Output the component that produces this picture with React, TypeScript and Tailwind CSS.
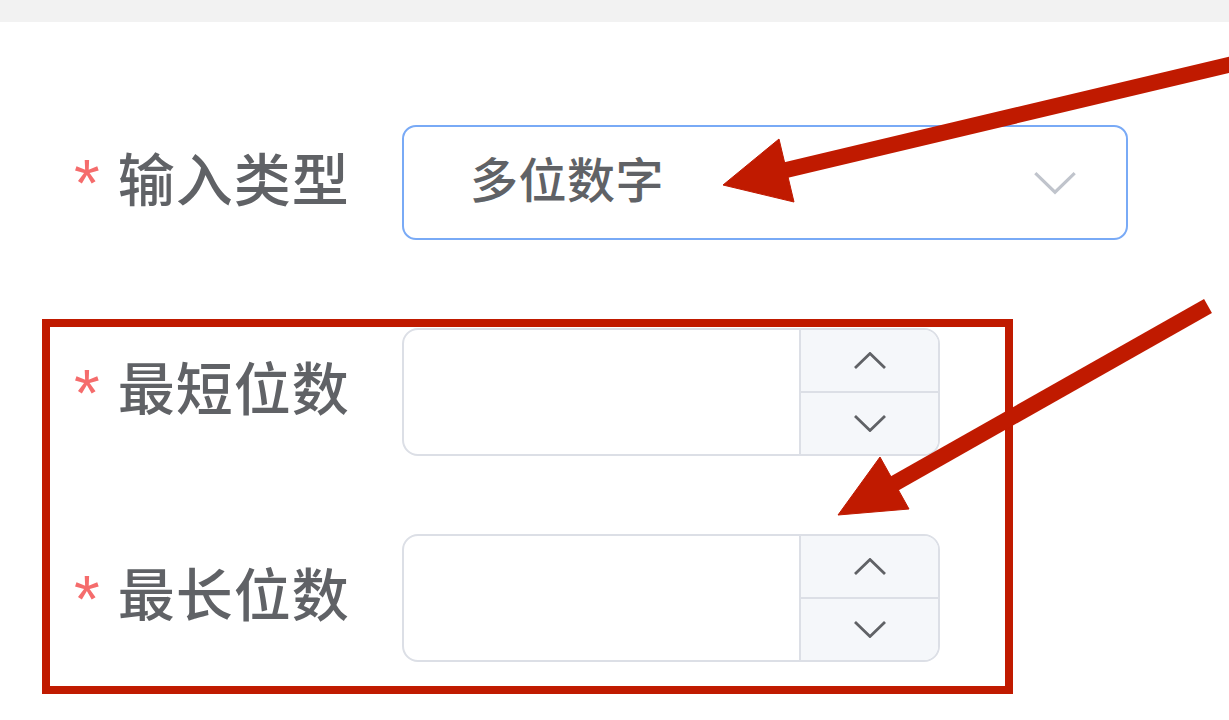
import React from 'react'

const font = { fontFamily: '"Noto Sans CJK SC", "Noto Sans", sans-serif' }

function Label({ text }: { text: string }) {
  return (
    <div className='w-[329px] flex items-center text-[57px] leading-none text-[#606266] font-medium -mt-[13px]'>
      <span className='text-[#f56c6c] text-[66px] font-normal font-["Liberation_Sans",sans-serif] ml-[1px] mr-[18px] mt-[14px]'>*</span>
      <span className='tracking-[1px]'>{text}</span>
    </div>
  )
}

function Chevron({ up, className, w = 2.8 }: { up?: boolean; className: string; w?: number }) {
  return (
    <svg viewBox='0 0 32 17' className={className} fill='none'>
      <path d={up ? 'M1 16 L16 1.5 L31 16' : 'M1 1 L16 15.5 L31 1'} stroke='currentColor' strokeWidth={w} />
    </svg>
  )
}

function NumberRow({ text }: { text: string }) {
  return (
    <div className='flex items-center'>
      <Label text={text} />
      <div className='w-[538px] h-[128px] border-2 border-[#dcdfe6] rounded-[16px] flex overflow-hidden bg-white'>
        <div className='flex-1' />
        <div className='w-[139px] border-l-2 border-[#dcdfe6] bg-[#f5f7fa] flex flex-col text-[#606266]'>
          <div className='flex-1 flex items-center justify-center border-b-2 border-[#dcdfe6]'>
            <Chevron up className='w-[32px] h-[17px]' />
          </div>
          <div className='flex-1 flex items-center justify-center'>
            <Chevron className='w-[32px] h-[17px]' />
          </div>
        </div>
      </div>
    </div>
  )
}

export default function App() {
  return (
    <div className='relative w-[1229px] h-[720px] bg-white overflow-hidden' style={font}>
      <div className='h-[22px] bg-[#f2f2f2]' />

      <div className='mt-[103px] flex items-center pl-[73px]'>
        <Label text='输入类型' />
        <div className='w-[726px] h-[115px] border-2 border-[#79aaf6] rounded-[14px] flex items-center justify-between pl-[66px] pr-[50px]'>
          <span className='text-[48px] leading-none text-[#606266] font-medium -mt-[12px] tracking-[0.5px]'>多位数字</span>
          <Chevron className='w-[42px] h-[24px] text-[#c0c4cc]' w={2.4} />
        </div>
      </div>

      <div className='mt-[79px] ml-[42px] w-[971px] h-[375px] border-8 border-[#c01a00] pt-px pl-[23px] flex flex-col gap-[78px]'>
        <NumberRow text='最短位数' />
        <NumberRow text='最长位数' />
      </div>

      {/* annotation arrows */}
      <svg className='absolute inset-0 pointer-events-none' width='1229' height='720' viewBox='0 0 1229 720'>
        <g fill='#c01a00' stroke='#c01a00' style={{ filter: 'blur(0.6px)' }}>
          <line x1='782' y1='171' x2='1262' y2='57' strokeWidth='16' />
          <polygon points='723,185 794,202 779,139' strokeWidth='1' strokeLinejoin='round' />
          <line x1='890' y1='486' x2='1208' y2='306' strokeWidth='16' />
          <polygon points='838,515 909,509 880,457' strokeWidth='1' strokeLinejoin='round' />
        </g>
      </svg>
    </div>
  )
}
